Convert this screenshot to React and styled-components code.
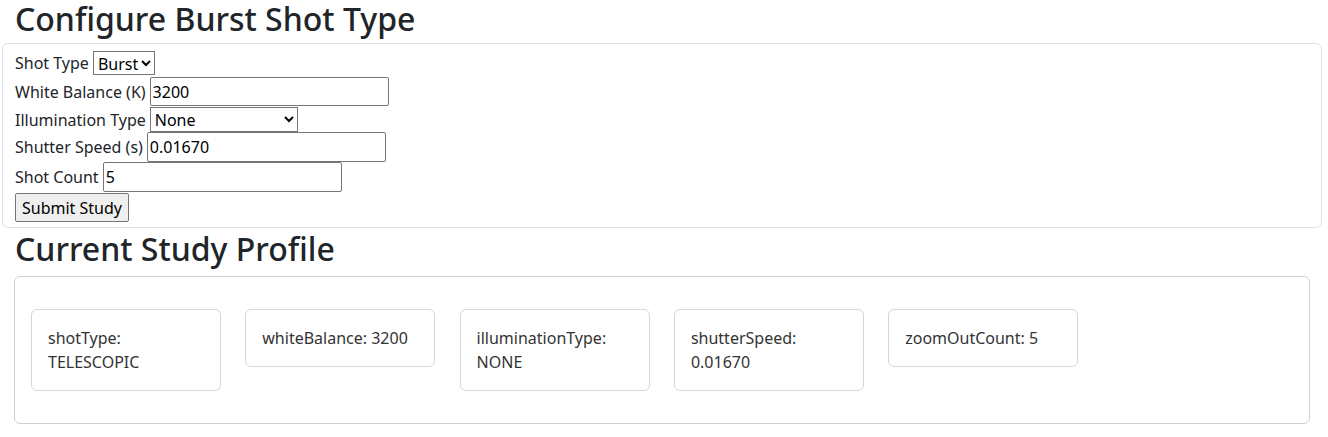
import React, { useState } from "react";
import styled, { createGlobalStyle } from "styled-components";

const GlobalStyle = createGlobalStyle`
  body {
    margin: 0;
    background: #fff;
    font-family: "Noto Sans", "Open Sans", sans-serif;
    color: #212529;
  }
`;

const Page = styled.div`
  padding: 0 6px 0 2px;
`;

const Heading = styled.h2`
  margin: 0;
  padding-left: 13px;
  font-size: 32px;
  font-weight: 500;
  line-height: 1.2;
  height: ${(p) => p.$height || 43}px;
  padding-top: ${(p) => p.$top || 0}px;
  box-sizing: border-box;
  color: #212529;
`;

const FormBox = styled.form`
  display: flex;
  flex-direction: column;
  align-items: flex-start;
  border: 1px solid #dee2e6;
  border-radius: 6px;
  padding: 7px 12px 5px;
  font-size: 16px;
`;

const Row = styled.label`
  display: flex;
  align-items: center;
  gap: 4px;
  height: ${(p) => p.$h}px;
  margin-bottom: ${(p) => p.$mb || 0}px;
  line-height: 24px;
`;

const TextInput = styled.input`
  box-sizing: border-box;
  width: 239px;
  height: 100%;
  font: 16px "Noto Sans", sans-serif;
  color: #000;
  padding: 1px 2px;
  border: 1px solid #767676;
  border-radius: 2px;
  margin: 0;
`;

const Select = styled.select`
  box-sizing: border-box;
  width: ${(p) => p.$w}px;
  height: 100%;
  font: 16px "Noto Sans", sans-serif;
  color: #000;
  background: #fff;
  border: 1px solid #767676;
  border-radius: 0;
  padding: 0;
  margin: 0;
`;

const SubmitButton = styled.button`
  box-sizing: border-box;
  height: 29px;
  padding: 1px 6px;
  font: 16px "Noto Sans", sans-serif;
  color: #000;
  background: #efefef;
  border: 1px solid #767676;
  border-radius: 2px;
`;

const ProfileBox = styled.div`
  margin: 0 12px;
  display: flex;
  align-items: flex-start;
  gap: 24.3px;
  border: 1px solid #d0d0d0;
  border-radius: 6px;
  padding: 32px 16px;
  min-height: 147px;
  box-sizing: border-box;
`;

const Card = styled.div`
  box-sizing: border-box;
  width: 190px;
  padding: 16px;
  border: 1px solid #d6d6d6;
  border-radius: 6px;
  font-size: 16px;
  line-height: 24px;
  color: #333;
`;

export default function App() {
  const [shotType, setShotType] = useState("Burst");
  const [whiteBalance, setWhiteBalance] = useState("3200");
  const [illumination, setIllumination] = useState("None");
  const [shutter, setShutter] = useState("0.01670");
  const [count, setCount] = useState("5");

  const profile = [
    ["shotType", "TELESCOPIC"],
    ["whiteBalance", "3200"],
    ["illuminationType", "NONE"],
    ["shutterSpeed", "0.01670"],
    ["zoomOutCount", "5"],
  ];

  return (
    <Page>
      <GlobalStyle />
      <Heading>Configure Burst Shot Type</Heading>
      <FormBox onSubmit={(e) => e.preventDefault()}>
        <Row $h={24} $mb={2}>
          Shot Type
          <Select $w={62} value={shotType} onChange={(e) => setShotType(e.target.value)}>
            <option>Burst</option>
            <option>Single</option>
          </Select>
        </Row>
        <Row $h={29} $mb={1}>
          White Balance (K)
          <TextInput value={whiteBalance} onChange={(e) => setWhiteBalance(e.target.value)} />
        </Row>
        <Row $h={25}>
          Illumination Type
          <Select $w={148} value={illumination} onChange={(e) => setIllumination(e.target.value)}>
            <option>None</option>
            <option>Flash</option>
          </Select>
        </Row>
        <Row $h={30}>
          Shutter Speed (s)
          <TextInput value={shutter} onChange={(e) => setShutter(e.target.value)} />
        </Row>
        <Row $h={30} $mb={1}>
          Shot Count
          <TextInput value={count} onChange={(e) => setCount(e.target.value)} />
        </Row>
        <SubmitButton type="submit">Submit Study</SubmitButton>
      </FormBox>
      <Heading $top={2} $height={48}>Current Study Profile</Heading>
      <ProfileBox>
        {profile.map(([k, v]) => (
          <Card key={k}>
            {k}: {v}
          </Card>
        ))}
      </ProfileBox>
    </Page>
  );
}
